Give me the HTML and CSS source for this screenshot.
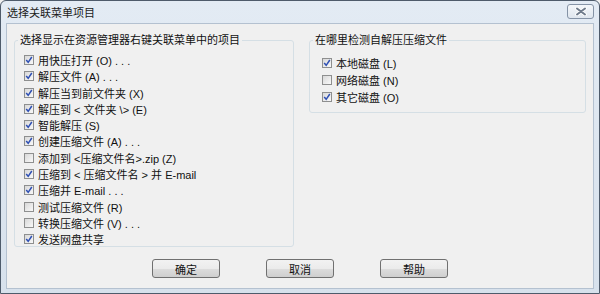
FILE: index.html
```html
<!DOCTYPE html>
<html lang="zh-CN">
<head>
    <meta charset="UTF-8">
    <title>选择关联菜单项目</title>
    <link rel="stylesheet" href="styles.css">
</head>
<body>
    <div class="window">
        <div class="titlebar">
            <span class="title">选择关联菜单项目</span>
            <span class="close-btn">
                <svg width="12" height="9" viewBox="0 0 12 9">
                    <path d="M2 1.5 L10 7.5 M10 1.5 L2 7.5" stroke="#fff" stroke-width="3.6" stroke-linecap="round"/>
                    <path d="M2 1.5 L10 7.5 M10 1.5 L2 7.5" stroke="#6f7b8b" stroke-width="2" stroke-linecap="round"/>
                </svg>
            </span>
        </div>
        <div class="client">
            <div class="groups">
                <fieldset class="group group-left">
                    <legend>选择显示在资源管理器右键关联菜单中的项目</legend>
                    <div class="rows">
                        <div class="row"><span class="cb on"></span>用快压打开 (O) . . .</div>
                        <div class="row"><span class="cb on"></span>解压文件 (A) . . .</div>
                        <div class="row"><span class="cb on"></span>解压当到前文件夹 (X)</div>
                        <div class="row"><span class="cb on"></span>解压到 &lt; 文件夹 \&gt; (E)</div>
                        <div class="row"><span class="cb on"></span>智能解压 (S)</div>
                        <div class="row"><span class="cb on"></span>创建压缩文件 (A) . . .</div>
                        <div class="row"><span class="cb"></span>添加到 &lt;压缩文件名&gt;.zip (Z)</div>
                        <div class="row"><span class="cb on"></span>压缩到 &lt; 压缩文件名 &gt; 并 E-mail</div>
                        <div class="row"><span class="cb on"></span>压缩并 E-mail . . .</div>
                        <div class="row"><span class="cb"></span>测试压缩文件 (R)</div>
                        <div class="row"><span class="cb"></span>转换压缩文件 (V) . . .</div>
                        <div class="row"><span class="cb on"></span>发送网盘共享</div>
                    </div>
                </fieldset>
                <fieldset class="group group-right">
                    <legend>在哪里检测自解压压缩文件</legend>
                    <div class="rows">
                        <div class="row"><span class="cb on"></span>本地磁盘 (L)</div>
                        <div class="row"><span class="cb"></span>网络磁盘 (N)</div>
                        <div class="row"><span class="cb on"></span>其它磁盘 (O)</div>
                    </div>
                </fieldset>
            </div>
            <div class="buttons">
                <button>确定</button>
                <button>取消</button>
                <button>帮助</button>
            </div>
        </div>
    </div>
</body>
</html>
```
FILE: styles.css
```css
* {
    box-sizing: border-box;
}

body {
    margin: 0;
    font-family: 'Liberation Sans', 'Noto Sans CJK SC', sans-serif;
    font-size: 11px;
    color: #111;
    background: #f0f0f0;
}

.window {
    width: 600px;
    height: 294px;
    border: 1px solid #4e5b6b;
    border-radius: 6px 6px 0 0;
    background: linear-gradient(#e3ebf4, #d7e1ec);
    padding: 0 5px 4px 5px;
    display: flex;
    flex-direction: column;
}

.titlebar {
    height: 22px;
    display: flex;
    align-items: center;
    justify-content: space-between;
}

.title {
    padding-left: 1px;
    color: #1b1b1b;
}

.close-btn {
    width: 27px;
    height: 15px;
    margin-top: -2px;
    border: 1px solid #8593a6;
    border-radius: 3px;
    background: linear-gradient(#f4f7fa, #dfe6ee);
    display: flex;
    align-items: center;
    justify-content: center;
}

.client {
    flex: 1;
    border: 1px solid #b4c1d0;
    background: #f0f0f0;
    padding: 9px 0 0 7px;
}

.groups {
    display: flex;
    align-items: flex-start;
    gap: 15px;
}

.group {
    margin: 0;
    border: 1px solid #d5dfe5;
    border-radius: 3px;
    padding: 6px 0 0 0;
    min-width: 0;
}

.group legend {
    margin-left: 3px;
    padding: 0 2px;
    line-height: 14px;
    color: #111;
}

.group-left {
    width: 280px;
}

.group-right {
    width: 277px;
    padding-top: 9px;
    padding-bottom: 8px;
}

.rows {
    display: flex;
    flex-direction: column;
    gap: 2.3px;
}

.group-left .rows {
    padding-left: 9px;
}

.group-right .rows {
    padding-left: 12px;
    gap: 3px;
}

.row {
    height: 14px;
    display: flex;
    align-items: center;
    white-space: nowrap;
}

.cb {
    width: 10px;
    height: 10px;
    margin-right: 4px;
    border: 1px solid #8e8f8f;
    background: linear-gradient(135deg, #d8d8d8, #f9f9f9);
    flex: none;
}

.cb.on {
    background: url("data:image/svg+xml,%3Csvg xmlns='http://www.w3.org/2000/svg' width='8' height='8' viewBox='0 0 8 8'%3E%3Cpath d='M1.2 4 L3.2 6.3 L6.8 1' fill='none' stroke='%232f50b4' stroke-width='1.5'/%3E%3C/svg%3E") center no-repeat, linear-gradient(135deg, #d8d8d8, #f9f9f9);
}

.buttons {
    display: flex;
    justify-content: center;
    gap: 46px;
    margin-top: 12px;
    padding-right: 7px;
}

button {
    width: 68px;
    height: 19px;
    padding: 0;
    font-family: inherit;
    font-size: 11px;
    color: #111;
    border: 1px solid #707070;
    border-radius: 3px;
    background: linear-gradient(#f2f2f2 0%, #ebebeb 50%, #dddddd 51%, #cfcfcf 100%);
}
```
